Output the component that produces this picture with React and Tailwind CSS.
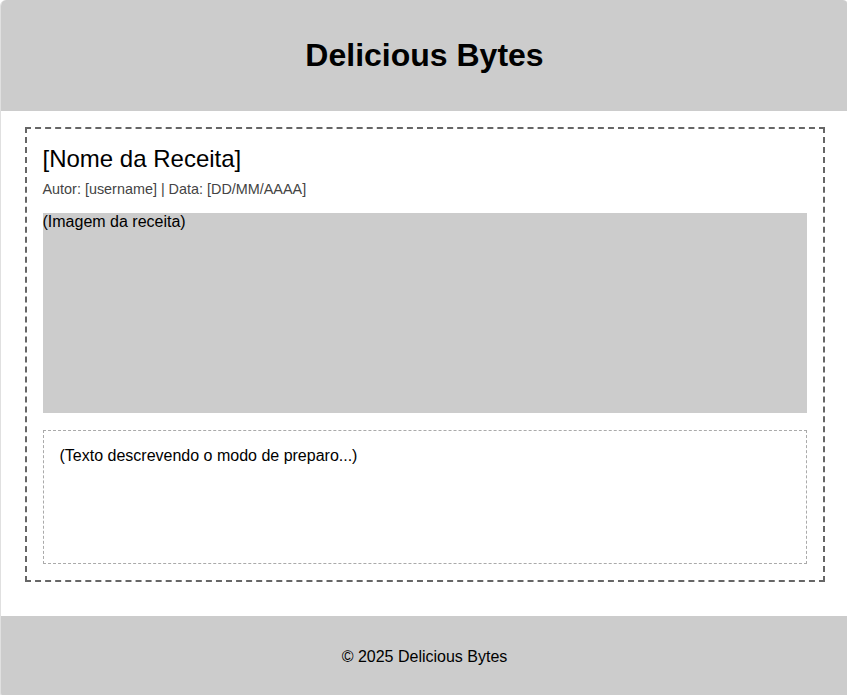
import React from 'react';

export default function App() {
  return (
    <div className="w-[847px] h-[695px] overflow-hidden bg-white font-['Liberation_Sans',Arial,sans-serif] text-black">
      <div className="w-[849px] border-x border-b border-[#e0e0e0] rounded-[6px] overflow-hidden">
        {/* Header */}
        <header className="bg-[#cccccc] py-4 text-center">
          <h1 className="my-[21px] text-[32px] font-bold leading-[37px]">Delicious Bytes</h1>
        </header>

        {/* Recipe */}
        <main className="pt-4 pb-[34px]">
          <article className="w-[800px] mx-auto border-2 border-dashed border-[#666666] p-4">
            <h2 className="text-[24px] leading-[28px]">[Nome da Receita]</h2>
            <p className="mt-2 text-[14.4px] leading-4 text-[#444444]">Autor: [username] | Data: [DD/MM/AAAA]</p>
            <div className="mt-4 h-[200px] bg-[#cccccc] text-[16px] leading-[18px]">(Imagem da receita)</div>
            <div className="mt-[17px] h-[134px] border border-dashed border-[#aaaaaa] p-4 text-[16px] leading-[18px]">
              (Texto descrevendo o modo de preparo...)
            </div>
          </article>
        </main>

        {/* Footer */}
        <footer className="bg-[#cccccc] p-4 text-center">
          <p className="my-4 text-[16px] leading-[18px]">© 2025 Delicious Bytes</p>
        </footer>
      </div>
    </div>
  );
}
